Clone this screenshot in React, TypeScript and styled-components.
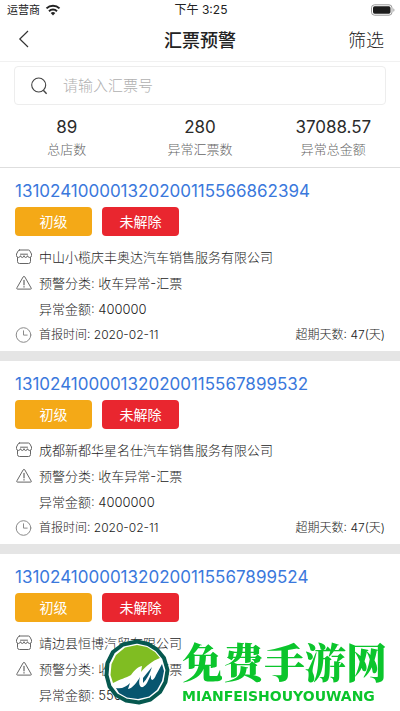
import React from "react";
import styled, { createGlobalStyle } from "styled-components";

const GlobalStyle = createGlobalStyle`
  * { box-sizing: border-box; }
  body {
    margin: 0;
    background: #fff;
    color: #333;
    font-family: Inter, "Noto Sans CJK SC", sans-serif;
    font-weight: 400;
  }
  button, input { font-family: inherit; font-weight: inherit; }
  h1, h2, p, dl, dd, dt { margin: 0; }
`;

const Page = styled.div`
  display: flex;
  flex-direction: column;
  height: 100vh;
  overflow: hidden;
  background: #fff;
`;

const StatusBar = styled.div`
  display: grid;
  grid-template-columns: 1fr auto 1fr;
  align-items: center;
  flex: none;
  height: 20px;
  padding: 0 5px 0 7px;
  color: #222;
  font-size: 12px;
  line-height: 20px;
`;

const Carrier = styled.span`
  display: flex;
  align-items: center;
  gap: 5px;
  font-size: 11px;
`;

const Battery = styled.span`
  display: flex;
  justify-content: flex-end;
`;

const NavBar = styled.header`
  display: grid;
  grid-template-columns: 1fr auto 1fr;
  align-items: center;
  flex: none;
  height: 42px;
  padding: 0 16px;
  border-bottom: 1px solid #f1f1f1;
`;

const Title = styled.h1`
  font-weight: 500;
  color: #222;
  font-size: 18px;
  line-height: 24px;
`;

const NavButton = styled.button<{ $end?: boolean }>`
  justify-self: ${(p) => (p.$end ? "end" : "start")};
  display: flex;
  align-items: center;
  padding: 0;
  border: 0;
  background: none;
  color: #222;
  font-size: 18px;
  font-weight: 300;
  line-height: 24px;
`;

const SearchBox = styled.label`
  display: flex;
  align-items: center;
  gap: 15px;
  flex: none;
  height: 39px;
  margin: 4px 14px 0;
  padding: 0 16px;
  border: 1px solid #ededed;
  border-radius: 4px;
  color: #555;
`;

const SearchInput = styled.input`
  flex: 1;
  min-width: 0;
  padding: 0;
  border: 0;
  outline: 0;
  background: none;
  color: #333;
  font-size: 15px;
  line-height: 20px;
  &::placeholder { color: #b0b0b0; opacity: 1; font-weight: 300; }
`;

const Summary = styled.dl`
  display: grid;
  grid-template-columns: repeat(3, 1fr);
  flex: none;
  height: 63px;
  padding: 12px 0 0;
  border-bottom: 1px solid #dedede;
  text-align: center;
`;

const Stat = styled.div`
  display: flex;
  flex-direction: column-reverse;
  justify-content: flex-end;
  gap: 2px;
`;

const StatLabel = styled.dt`
  color: #666;
  font-size: 13px;
  font-weight: 300;
  line-height: 20px;
`;

const StatValue = styled.dd`
  color: #2b2b2b;
  font-size: 17px;
  line-height: 20px;
`;

const List = styled.main`
  flex: 1;
  min-height: 0;
  overflow-y: auto;
  scrollbar-width: none;
  background: #e5e5e5;
  display: flex;
  flex-direction: column;
  gap: 10px;
`;

const Card = styled.article`
  flex: none;
  padding: 12px 15px 3px;
  background: #fff;
  font-weight: 300;
  &:last-child { padding-bottom: 32px; }
`;

const DraftNumber = styled.a`
  display: block;
  color: #3a78dc;
  font-size: 17px;
  font-weight: 400;
  line-height: 22px;
  text-decoration: none;
`;

const Tags = styled.div`
  display: flex;
  gap: 10px;
  margin: 5px 0 8px;
`;

const Tag = styled.span<{ $color: string }>`
  width: 77px;
  height: 29px;
  border-radius: 4px;
  background: ${(p) => p.$color};
  color: #fff;
  font-size: 14px;
  font-weight: 400;
  line-height: 29px;
  text-align: center;
`;

const Row = styled.div`
  display: grid;
  grid-template-columns: 18px 1fr auto;
  align-items: center;
  column-gap: 6px;
  height: 26px;
  color: #222;
`;

const RowText = styled.p<{ $small?: boolean }>`
  grid-column: 2;
  font-size: ${(p) => (p.$small ? 12 : 13)}px;
  line-height: 20px;
`;

const Overdue = styled.p`
  font-size: 12px;
  line-height: 20px;
`;

const Brand = styled.aside`
  position: fixed;
  right: 13px;
  bottom: 6px;
  display: flex;
  align-items: center;
  gap: 12px;
  pointer-events: none;
`;

const BrandWords = styled.div`
  display: flex;
  flex-direction: column;
  gap: 4px;
  color: #0bc52c;
`;

const BrandName = styled.strong`
  font-family: "Noto Serif CJK SC", "Noto Sans CJK SC", serif;
  font-size: 41px;
  font-weight: 900;
  line-height: 44px;
`;

const BrandLatin = styled.span`
  font-family: "DejaVu Sans", sans-serif;
  font-size: 14px;
  font-weight: 700;
  line-height: 18px;
`;

const WifiIcon = () => (
  <svg width="16" height="12" viewBox="0 0 16 12" fill="none" stroke="#222" strokeWidth="2" aria-hidden="true">
    <path d="M1.5 4.4a9.3 9.3 0 0 1 13 0" />
    <path d="M4 7.2a5.7 5.7 0 0 1 8 0" />
    <path d="M8 11.4 5.7 9.1a3.3 3.3 0 0 1 4.6 0Z" fill="#222" stroke="none" />
  </svg>
);

const BatteryIcon = () => (
  <svg width="24" height="12" viewBox="0 0 24 12" aria-hidden="true">
    <rect x="0.5" y="0.8" width="20.5" height="10.4" rx="3" fill="none" stroke="#999" />
    <rect x="2" y="2.3" width="17.5" height="7.4" rx="1.6" fill="#1c1c1c" />
    <path d="M22.4 4.2v3.6c1.4-.5 1.4-3.1 0-3.6Z" fill="#999" />
  </svg>
);

const BackIcon = () => (
  <svg width="16" height="22" viewBox="0 0 16 22" fill="none" stroke="#333" strokeWidth="1.2" aria-hidden="true">
    <path d="M12 1 3.8 9l8.2 8" />
  </svg>
);

const SearchIcon = () => (
  <svg width="17" height="18" viewBox="0 0 17 18" fill="none" stroke="#444" strokeWidth="1.1" aria-hidden="true">
    <circle cx="7.7" cy="8" r="7" />
    <path d="m12.3 13.3 3.3 3.5" strokeWidth="1.4" />
  </svg>
);

const lineIcon = {
  width: 18,
  height: 18,
  viewBox: "0 0 18 18",
  fill: "none",
  stroke: "#666",
  strokeWidth: 1,
  strokeLinecap: "round",
  strokeLinejoin: "round",
  "aria-hidden": true,
} as const;

const ShopIcon = () => (
  <svg {...lineIcon}>
    <path d="M4.5 2h9q1 0 1.4 1L16.5 6v1.5q0 2-1.8 2T12.500 7.700q-.5 1.800-1.800 1.800T9 7.700q-.4 1.800-1.700 1.800T5.500 7.700Q5 9.500 3.300 9.500T1.500 7.500V6l1.600-3q.4-1 1.400-1Z" />
    <path d="M5.500 6.200h7M2.500 9.600v3.900q0 2 2 2h9q2 0 2-2V9.600" />
  </svg>
);

const WarnIcon = () => (
  <svg {...lineIcon}>
    <path d="M8.300 2.700q.7-1 1.400 0l6.500 11.400q.5 1-.7 1h-13q-1.200 0-.7-1Z" />
    <path d="M9 6.300v4.600M9 12.600v.5" stroke="#444" />
  </svg>
);

const ClockIcon = () => (
  <svg {...lineIcon} stroke="#8a8a8a">
    <circle cx="8.5" cy="9" r="7.3" />
    <path d="M8.500 4.800v4.300h3.700" />
  </svg>
);

const BrandLogo = () => (
  <svg width="66" height="66" viewBox="0 0 66 66" aria-hidden="true">
    <path
      d="M33 2.500 44 5 53 10.500 60 19 63.500 31 61.500 43 56 53 46.500 60.500 35 63.500 22 61.500 12 56 5.500 47.500 2.500 36 3.500 24 9 13 19 5.500Z"
      fill="#fff" stroke="#06584f" strokeWidth="4" strokeLinejoin="round"
    />
    <path d="M33 6 43 8 51 13 56 19C48 22 42 27 37 33L38 27C33 28 30 32 27 36 22 39 16 40 9 44L6.500 36 7.500 25 12 16 21 8.500Z" fill="#80bd22" />
    <path d="M12 49C18 50 22 48 26 44L24 50C29 49 33 43 36 38 34 45 36 49 39 48 43 46 44 41 47 36 46 43 50 42 52 36L58 25 60 32 58 42 53 51 45 57.500 34 60 23 58.500 15 54Z" fill="#07566f" />
    <path d="M39 39 48 28C46 34 43 40 39 44Z" fill="#07566f" />
  </svg>
);

const stats = [
  { label: "总店数", value: "89" },
  { label: "异常汇票数", value: "280" },
  { label: "异常总金额", value: "37088.57" },
];

type Draft = { number: string; company: string; amount: string; date?: string; days?: number };

const drafts: Draft[] = [
  { number: "131024100001320200115566862394", company: "中山小榄庆丰奥达汽车销售服务有限公司", amount: "400000", date: "2020-02-11", days: 47 },
  { number: "131024100001320200115567899532", company: "成都新都华星名仕汽车销售服务有限公司", amount: "4000000", date: "2020-02-11", days: 47 },
  { number: "131024100001320200115567899524", company: "靖边县恒博汽贸有限公司", amount: "550000" },
];

const DraftCard = ({ draft }: { draft: Draft }) => (
  <Card>
    <DraftNumber href="#">{draft.number}</DraftNumber>
    <Tags>
      <Tag $color="#f4a917">初级</Tag>
      <Tag $color="#e9262f">未解除</Tag>
    </Tags>
    <Row>
      <ShopIcon />
      <RowText>{draft.company}</RowText>
    </Row>
    <Row>
      <WarnIcon />
      <RowText>预警分类: 收车异常-汇票</RowText>
    </Row>
    <Row>
      <RowText>异常金额: {draft.amount}</RowText>
    </Row>
    {draft.date && (
      <Row>
        <ClockIcon />
        <RowText $small>首报时间: {draft.date}</RowText>
        <Overdue>超期天数: {draft.days}(天)</Overdue>
      </Row>
    )}
  </Card>
);

export default function App() {
  return (
    <Page>
      <GlobalStyle />
      <StatusBar>
        <Carrier>运营商<WifiIcon /></Carrier>
        <span>下午 3:25</span>
        <Battery><BatteryIcon /></Battery>
      </StatusBar>
      <NavBar>
        <NavButton type="button" aria-label="返回"><BackIcon /></NavButton>
        <Title>汇票预警</Title>
        <NavButton type="button" $end>筛选</NavButton>
      </NavBar>
      <SearchBox>
        <SearchIcon />
        <SearchInput type="text" placeholder="请输入汇票号" />
      </SearchBox>
      <Summary>
        {stats.map((s) => (
          <Stat key={s.label}>
            <StatLabel>{s.label}</StatLabel>
            <StatValue>{s.value}</StatValue>
          </Stat>
        ))}
      </Summary>
      <List>
        {drafts.map((d) => <DraftCard key={d.number} draft={d} />)}
      </List>
      <Brand>
        <BrandLogo />
        <BrandWords>
          <BrandName>免费手游网</BrandName>
          <BrandLatin>MIANFEISHOUYOUWANG</BrandLatin>
        </BrandWords>
      </Brand>
    </Page>
  );
}
